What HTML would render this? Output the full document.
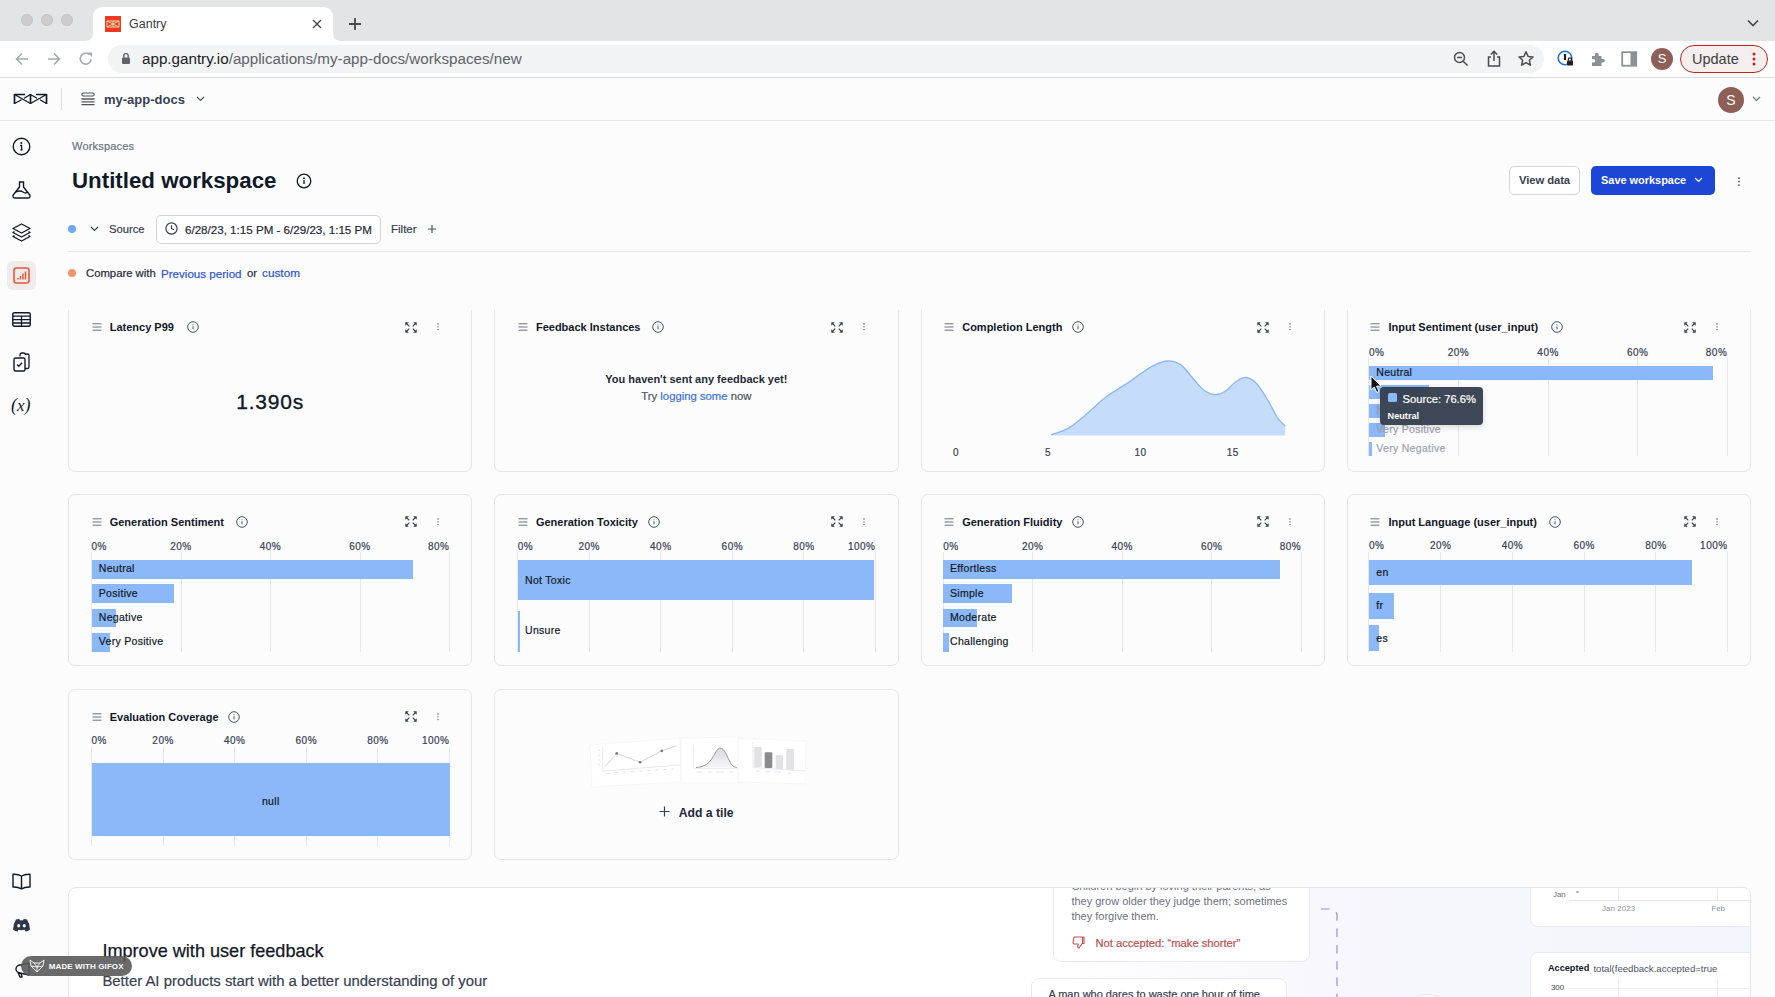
<!DOCTYPE html>
<html><head><meta charset="utf-8">
<style>
*{box-sizing:border-box;margin:0;padding:0}
html,body{width:1775px;height:997px;overflow:hidden;background:#fcfcfd;font-family:"Liberation Sans",sans-serif;color:#111827}
.a{position:absolute}
.t{position:absolute;white-space:nowrap;line-height:1}
.m{-webkit-text-stroke:0.2px currentColor}
svg{position:absolute;overflow:visible}
/* chrome */
#tabstrip{left:0;top:0;width:1775px;height:41px;background:#e3e4e8}
#toolbar{left:0;top:41px;width:1775px;height:37px;background:#fff;border-bottom:1px solid #d9dadc}
.light{width:12px;height:12px;border-radius:50%;background:#cdcdd0;border:1px solid #c2c2c5;top:14px}
#tab{left:93px;top:7px;width:240px;height:34px;background:#fff;border-radius:9px 9px 0 0}
#omni{left:108px;top:45px;width:1436px;height:28px;background:#f1f3f4;border-radius:14px}
/* app */
#apphdr{left:0;top:78px;width:1775px;height:43px;background:#fcfcfd;border-bottom:1px solid #e5e7eb}
.card{position:absolute;background:#fcfcfd;border:1.5px solid #e3e5e9;border-radius:7px;overflow:hidden}
.ctitle{position:absolute;font-size:11px;font-weight:700;color:#111827;white-space:nowrap;line-height:1}
.axis{position:absolute;font-size:10px;color:#374151;white-space:nowrap;line-height:1;letter-spacing:0.5px;-webkit-text-stroke:0.2px #374151}
.grid{position:absolute;width:1px;background:#e5e7eb}
.bar{position:absolute;background:#8ab8f8}
.blab{position:absolute;font-size:10.5px;color:#111827;white-space:nowrap;line-height:1;letter-spacing:0.3px;-webkit-text-stroke:0.2px currentColor}
</style></head><body>

<!-- ============ CHROME ============ -->
<div id="tabstrip" class="a"></div>
<div class="a light" style="left:21px"></div>
<div class="a light" style="left:41px"></div>
<div class="a light" style="left:61px"></div>
<div id="tab" class="a"></div>
<svg style="left:85px;top:33px" width="8" height="8" viewBox="0 0 8 8"><path d="M0 8 Q8 8 8 0 V8 Z" fill="#fff"/></svg>
<svg style="left:333px;top:33px" width="8" height="8" viewBox="0 0 8 8"><path d="M8 8 Q0 8 0 0 V8 Z" fill="#fff"/></svg>
<div id="toolbar" class="a"></div>
<div id="omni" class="a"></div>

<!-- favicon -->
<div class="a" style="left:105px;top:16px;width:16px;height:16px;background:#ef3a22"></div>
<svg style="left:105px;top:16px" width="16" height="16" viewBox="0 0 16 16"><path d="M2 5 L14 11 M2 11 L14 5 M2 5 V11 M14 5 V11 M8 5 V11 M2 5 H14 M2 11 H14" stroke="#f5d9a8" stroke-width="1" fill="none"/></svg>
<div class="t" style="left:129px;top:18px;font-size:12.5px;color:#3c4043">Gantry</div>
<svg style="left:312px;top:19px" width="10" height="10" viewBox="0 0 10 10"><path d="M1 1 L9 9 M9 1 L1 9" stroke="#45474a" stroke-width="1.3"/></svg>
<svg style="left:348px;top:17px" width="14" height="14" viewBox="0 0 14 14"><path d="M7 1 V13 M1 7 H13" stroke="#45474a" stroke-width="1.8"/></svg>
<svg style="left:1747px;top:18px" width="12" height="10" viewBox="0 0 12 10"><path d="M1 2.5 L6 7.5 L11 2.5" stroke="#45474a" stroke-width="1.6" fill="none"/></svg>
<!-- nav -->
<svg style="left:14px;top:51px" width="16" height="16" viewBox="0 0 16 16"><path d="M14 8 H2.5 M8 2.5 L2.5 8 L8 13.5" stroke="#a6a9ad" stroke-width="1.6" fill="none"/></svg>
<svg style="left:46px;top:51px" width="16" height="16" viewBox="0 0 16 16"><path d="M2 8 H13.5 M8 2.5 L13.5 8 L8 13.5" stroke="#a6a9ad" stroke-width="1.6" fill="none"/></svg>
<svg style="left:78px;top:51px" width="16" height="16" viewBox="0 0 16 16"><path d="M13.2 8.5 A5.5 5.5 0 1 1 11.5 3.6" stroke="#a6a9ad" stroke-width="1.6" fill="none"/><path d="M9.5 1.5 L14 1.5 L14 6 Z" fill="#a6a9ad"/></svg>
<!-- lock -->
<svg style="left:121px;top:52px" width="10" height="13" viewBox="0 0 10 13"><rect x="1" y="5.5" width="8" height="6.5" rx="1" fill="#5f6368"/><path d="M2.8 5.8 V3.8 A2.2 2.2 0 0 1 7.2 3.8 V5.8" stroke="#5f6368" stroke-width="1.4" fill="none"/></svg>
<div class="t" style="left:142px;top:51px;font-size:15.2px;color:#5f6368"><span style="color:#202124">app.gantry.io</span>/applications/my-app-docs/workspaces/new</div>
<!-- right icons -->
<svg style="left:1453px;top:51px" width="16" height="16" viewBox="0 0 16 16"><circle cx="6.5" cy="6.5" r="5" stroke="#4a4d51" stroke-width="1.5" fill="none"/><path d="M4 6.5 H9 M10.2 10.2 L14.5 14.5" stroke="#4a4d51" stroke-width="1.5"/></svg>
<svg style="left:1486px;top:50px" width="16" height="18" viewBox="0 0 16 18"><path d="M8 1.5 V11 M4.8 4.5 L8 1.3 L11.2 4.5" stroke="#4a4d51" stroke-width="1.5" fill="none"/><path d="M5 7 H2.5 V16 H13.5 V7 H11" stroke="#4a4d51" stroke-width="1.5" fill="none"/></svg>
<svg style="left:1517px;top:50px" width="18" height="18" viewBox="0 0 18 18"><path d="M9 1.8 L11.1 6.4 L16 6.9 L12.3 10.2 L13.4 15.2 L9 12.6 L4.6 15.2 L5.7 10.2 L2 6.9 L6.9 6.4 Z" stroke="#4a4d51" stroke-width="1.5" fill="none" stroke-linejoin="round"/></svg>
<svg style="left:1557px;top:50px" width="18" height="18" viewBox="0 0 18 18"><circle cx="8" cy="8" r="6.8" stroke="#1a73e8" stroke-width="1.6" fill="#fff"/><path d="M8 4 V10" stroke="#202124" stroke-width="2.2"/><rect x="10" y="10.5" width="6" height="5" rx="1" fill="#202124"/><path d="M11.3 10.8 V9.5 A1.7 1.7 0 0 1 14.7 9.5 V10.8" stroke="#202124" stroke-width="1.2" fill="none"/></svg>
<svg style="left:1589px;top:51px" width="17" height="17" viewBox="0 0 17 17"><path d="M3 5 H6 V3.5 A1.8 1.8 0 0 1 9.6 3.5 V5 H12.5 V8 H14 A1.8 1.8 0 0 1 14 11.6 H12.5 V15 H3 V11.6 H4.5 A1.8 1.8 0 0 0 4.5 8 H3 Z" fill="#8d9096"/></svg>
<svg style="left:1621px;top:51px" width="17" height="16" viewBox="0 0 17 16"><rect x="1.2" y="1.2" width="14" height="13.5" stroke="#8d9096" stroke-width="1.8" fill="none"/><rect x="9.5" y="1.2" width="5.7" height="13.5" fill="#8d9096"/></svg>
<div class="a" style="left:1651px;top:48px;width:22px;height:22px;border-radius:50%;background:#8e5f57"></div>
<div class="t" style="left:1651px;top:52px;width:22px;text-align:center;font-size:13px;color:#fff">S</div>
<div class="a" style="left:1680px;top:45px;width:88px;height:28px;border-radius:14px;border:1.5px solid #c5221f;background:#f4eeee"></div>
<div class="t" style="left:1692px;top:52px;font-size:14.5px;color:#3c4043">Update</div>
<svg style="left:1751px;top:52px" width="6" height="14" viewBox="0 0 6 14"><circle cx="3" cy="2" r="1.5" fill="#c5221f"/><circle cx="3" cy="7" r="1.5" fill="#c5221f"/><circle cx="3" cy="12" r="1.5" fill="#c5221f"/></svg>

<!-- ============ APP HEADER ============ -->
<div id="apphdr" class="a"></div>

<!-- logo -->
<svg style="left:13px;top:93px" width="36" height="12" viewBox="0 0 36 12"><path d="M1.5 1.5 H12 M23 1.5 H33.5 M1.5 1.5 L17.5 10.5 M17.5 10.5 L33.5 1.5 M1.5 10.5 L8.5 6.8 M11 5.2 L17.5 1.5 M17.5 1.5 L24 5.2 M27 6.8 L33.5 10.5" stroke="#111827" stroke-width="1.3" fill="none"/><path d="M1.5 1 V11 M17.5 1 V11 M33.5 1 V11" stroke="#111827" stroke-width="1.7"/></svg>
<div class="a" style="left:61px;top:88px;width:1px;height:22px;background:#dcdde0"></div>
<!-- stack icon -->
<svg style="left:81px;top:92px" width="14" height="14" viewBox="0 0 14 14"><rect x="0.8" y="1" width="12.4" height="3" rx="1.5" stroke="#4b5563" stroke-width="1.1" fill="none"/><path d="M0.5 7 H13.5 M0.5 9.8 H13.5 M0.5 12.6 H13.5" stroke="#4b5563" stroke-width="1.3"/></svg>
<div class="t" style="left:104px;top:92.5px;font-size:13px;font-weight:700;color:#374151">my-app-docs</div>
<svg style="left:196px;top:96px" width="9" height="6" viewBox="0 0 9 6"><path d="M1 1 L4.5 4.5 L8 1" stroke="#4b5563" stroke-width="1.2" fill="none"/></svg>
<div class="a" style="left:1718px;top:87px;width:26px;height:26px;border-radius:50%;background:#8e5f57"></div>
<div class="t" style="left:1718px;top:93px;width:26px;text-align:center;font-size:14px;color:#fff">S</div>
<svg style="left:1752px;top:96px" width="9" height="6" viewBox="0 0 9 6"><path d="M1 1 L4.5 4.5 L8 1" stroke="#6b7280" stroke-width="1.2" fill="none"/></svg>

<!-- ============ SIDEBAR ============ -->
<svg style="left:12px;top:137px" width="19" height="19" viewBox="0 0 19 19"><circle cx="9.5" cy="9.5" r="8.3" stroke="#111827" stroke-width="1.4" fill="none"/><circle cx="9.3" cy="5.9" r="1" fill="#111827"/><path d="M8.2 8.5 H9.6 V12.8 M8.4 12.8 H10.6" stroke="#111827" stroke-width="1.3" fill="none"/></svg>
<svg style="left:12px;top:181px" width="19" height="18" viewBox="0 0 19 18"><path d="M6.8 1 H12.2 M7.5 1 V6 L1.2 14 A2 2 0 0 0 3 17 H16 A2 2 0 0 0 17.8 14 L11.5 6 V1" stroke="#111827" stroke-width="1.4" fill="none" stroke-linejoin="round"/><path d="M4 11 Q8 9 11 11 T15 11" stroke="#111827" stroke-width="1.3" fill="none"/></svg>
<svg style="left:12px;top:223px" width="19" height="19" viewBox="0 0 19 19"><path d="M9.5 1 L18 5.5 L9.5 10 L1 5.5 Z" stroke="#111827" stroke-width="1.4" fill="none" stroke-linejoin="round"/><path d="M2.5 8.5 L1 9.5 L9.5 14 L18 9.5 L16.5 8.5 M2.5 12.5 L1 13.5 L9.5 18 L18 13.5 L16.5 12.5" stroke="#111827" stroke-width="1.4" fill="none" stroke-linejoin="round"/></svg>
<div class="a" style="left:7px;top:261px;width:29px;height:29px;border-radius:6px;background:#efeceb"></div>
<svg style="left:13px;top:267px" width="17" height="17" viewBox="0 0 17 17"><rect x="1" y="1" width="15" height="15" rx="2.5" stroke="#e8593a" stroke-width="1.6" fill="none"/><path d="M5 12.5 V11 M7.5 12.5 V9 M10 12.5 V6.5 M12.5 12.5 V4.5" stroke="#e8593a" stroke-width="1.5"/></svg>
<svg style="left:12px;top:312px" width="19" height="15" viewBox="0 0 19 15"><rect x="0.8" y="0.8" width="17.4" height="13.4" rx="1.5" stroke="#111827" stroke-width="1.4" fill="none"/><path d="M0.8 4.2 H18.2 M0.8 7.6 H18.2 M0.8 11 H18.2 M9.5 4.2 V14" stroke="#111827" stroke-width="1.3"/></svg>
<svg style="left:13px;top:352px" width="17" height="20" viewBox="0 0 17 20"><path d="M7 4.5 V3 A2 2 0 0 1 9 1 H10.5 A2 2 0 0 1 12.5 3 M12 2 H14.5 A1.5 1.5 0 0 1 16 3.5 V15 A1.5 1.5 0 0 1 14.5 16.5 H12" stroke="#111827" stroke-width="1.3" fill="none"/><rect x="1" y="6" width="11" height="13" rx="1.5" stroke="#111827" stroke-width="1.4" fill="none"/><path d="M4 12.5 L5.8 14.3 L9 10.8" stroke="#111827" stroke-width="1.3" fill="none"/></svg>
<div class="t" style="left:11px;top:396px;font-family:'Liberation Serif',serif;font-style:italic;font-size:18px;color:#111827">(<span style="font-size:17px">x</span>)</div>
<svg style="left:12px;top:873px" width="19" height="17" viewBox="0 0 19 17"><path d="M9.5 3 Q6 1 1 1.3 V14 Q6 13.8 9.5 15.8 Q13 13.8 18 14 V1.3 Q13 1 9.5 3 Z M9.5 3 V15.8" stroke="#111827" stroke-width="1.4" fill="none" stroke-linejoin="round"/></svg>
<svg style="left:12px;top:918px" width="19" height="14" viewBox="0 0 19 14"><path d="M4 1.5 Q7 0.5 7.8 1.5 L8.3 2.4 Q9.5 2.2 10.7 2.4 L11.2 1.5 Q12 0.5 15 1.5 Q18 6 18 11.5 Q16 13.3 13.5 13.5 L12.5 11.8 Q10 12.6 6.5 11.8 L5.5 13.5 Q3 13.3 1 11.5 Q1 6 4 1.5 Z" fill="#2d3748"/><ellipse cx="6.7" cy="7.8" rx="1.5" ry="1.7" fill="#fff"/><ellipse cx="12.3" cy="7.8" rx="1.5" ry="1.7" fill="#fff"/></svg>
<svg style="left:12px;top:962px" width="19" height="16" viewBox="0 0 19 16"><path d="M6 3.5 A4 4 0 0 0 6 10.5 L17 13 V1 Z M6 10.5 L8 15 H10 L9 11" stroke="#111827" stroke-width="1.4" fill="none" stroke-linejoin="round"/></svg>

<!-- ============ TITLE AREA ============ -->
<div class="t m" style="left:72px;top:141px;font-size:11px;color:#6b7280;letter-spacing:0.2px">Workspaces</div>
<div class="t" style="left:72px;top:170px;font-size:22.3px;font-weight:700;color:#111827">Untitled workspace</div>
<svg style="left:296px;top:173px" width="16" height="16" viewBox="0 0 16 16"><circle cx="8" cy="8" r="6.8" stroke="#111827" stroke-width="1.3" fill="none"/><circle cx="8" cy="5.2" r="0.9" fill="#111827"/><path d="M8 7.3 V11" stroke="#111827" stroke-width="1.4"/></svg>
<div class="a" style="left:1509px;top:166px;width:71px;height:29px;border:1px solid #d1d5db;border-radius:5px;background:#fff"></div>
<div class="t" style="left:1519px;top:175px;font-size:11.3px;color:#374151;font-weight:700;letter-spacing:-0.1px">View data</div>
<div class="a" style="left:1591px;top:166px;width:124px;height:29px;border-radius:5px;background:#1d45d6"></div>
<div class="t" style="left:1601px;top:175.2px;font-size:10.95px;color:#fff;font-weight:700">Save workspace</div>
<svg style="left:1694px;top:177px" width="9" height="6" viewBox="0 0 9 6"><path d="M1 1 L4.5 4.5 L8 1" stroke="#fff" stroke-width="1.2" fill="none"/></svg>
<svg style="left:1736.5px;top:175.5px" width="4" height="12" viewBox="0 0 4 12"><circle cx="2" cy="2.2" r="0.85" fill="#374151"/><circle cx="2" cy="5.6" r="0.85" fill="#374151"/><circle cx="2" cy="9" r="0.85" fill="#374151"/></svg>

<!-- filter row -->
<div class="a" style="left:68px;top:225px;width:8px;height:8px;border-radius:50%;background:#6fa8f5"></div>
<svg style="left:90px;top:226px" width="9" height="6" viewBox="0 0 9 6"><path d="M1 1 L4.5 4.5 L8 1" stroke="#374151" stroke-width="1.2" fill="none"/></svg>
<div class="t m" style="left:109px;top:224px;font-size:11.2px;color:#374151">Source</div>
<div class="a" style="left:156px;top:215px;width:225px;height:29px;border:1px solid #d1d5db;border-radius:5px;background:#fff"></div>
<svg style="left:165px;top:222px" width="13" height="13" viewBox="0 0 13 13"><circle cx="6.5" cy="6.5" r="5.6" stroke="#374151" stroke-width="1.2" fill="none"/><path d="M6.5 3.3 V6.5 L8.8 7.8" stroke="#374151" stroke-width="1.2" fill="none"/></svg>
<div class="t m" style="left:185px;top:224px;font-size:11.6px;color:#1f2937">6/28/23, 1:15 PM - 6/29/23, 1:15 PM</div>
<div class="t m" style="left:391px;top:224px;font-size:11.5px;color:#374151">Filter</div>
<svg style="left:427px;top:224px" width="10" height="10" viewBox="0 0 10 10"><path d="M5 1 V9 M1 5 H9" stroke="#4b5563" stroke-width="1.2"/></svg>
<div class="a" style="left:68px;top:251px;width:1683px;height:1px;background:#e5e7eb"></div>
<div class="a" style="left:68px;top:269px;width:8px;height:8px;border-radius:50%;background:#f2956b"></div>
<div class="t m" style="left:86px;top:268px;font-size:11.3px;color:#1f2937">Compare with</div>
<div class="t m" style="left:161px;top:267.6px;font-size:11.6px;color:#2b55d0">Previous period</div>
<div class="t m" style="left:247px;top:268px;font-size:11.3px;color:#1f2937">or</div>
<div class="t m" style="left:262px;top:267.7px;font-size:11.8px;color:#2b55d0">custom</div>

<!--CARDS-->
<div class="a" style="left:0;top:310px;width:1775px;height:180px;overflow:hidden"><div class="a" style="left:0;top:-310px;width:1775px;height:500px">
<div class="card" style="left:68px;top:299.5px;width:404.25px;height:172px"></div>
<svg style="left:91.5px;top:323.0px" width="10" height="8" viewBox="0 0 10 8"><path d="M0.5 0.8 H9.5 M0.5 4 H9.5 M0.5 7.2 H9.5" stroke="#6b7280" stroke-width="1"/></svg>
<div class="ctitle" style="left:109.7px;top:322.4px">Latency P99</div>
<svg style="left:187px;top:321.2px" width="12" height="12" viewBox="0 0 12 12"><circle cx="6" cy="6" r="5.3" stroke="#4b5563" stroke-width="1" fill="none"/><path d="M6 5.3 V8.3" stroke="#4b5563" stroke-width="1"/><circle cx="6" cy="3.7" r="0.55" fill="#4b5563"/></svg>
<svg style="left:404.85px;top:321.8px" width="12" height="11" viewBox="0 0 12 11"><path d="M0.3 0.3 H3.8 L0.3 3.8 Z M11.7 0.3 H8.2 L11.7 3.8 Z M0.3 10.7 H3.8 L0.3 7.2 Z M11.7 10.7 H8.2 L11.7 7.2 Z" fill="#374151"/><path d="M1.5 1.5 L4.3 4.3 M10.5 1.5 L7.7 4.3 M1.5 9.5 L4.3 6.7 M10.5 9.5 L7.7 6.7" stroke="#374151" stroke-width="1.1"/></svg>
<svg style="left:436.75px;top:323.0px" width="2" height="8" viewBox="0 0 2 8"><circle cx="1" cy="1" r="0.65" fill="#374151"/><circle cx="1" cy="3.8" r="0.65" fill="#374151"/><circle cx="1" cy="6.6" r="0.65" fill="#374151"/></svg>
<div class="t" style="left:68px;width:404.25px;text-align:center;top:391.0px;font-size:21px;letter-spacing:0.8px;color:#111827;-webkit-text-stroke:0.35px #111827">1.390s</div>
<div class="card" style="left:494.25px;top:299.5px;width:404.25px;height:172px"></div>
<svg style="left:517.75px;top:323.0px" width="10" height="8" viewBox="0 0 10 8"><path d="M0.5 0.8 H9.5 M0.5 4 H9.5 M0.5 7.2 H9.5" stroke="#6b7280" stroke-width="1"/></svg>
<div class="ctitle" style="left:535.95px;top:322.4px">Feedback Instances</div>
<svg style="left:652px;top:321.2px" width="12" height="12" viewBox="0 0 12 12"><circle cx="6" cy="6" r="5.3" stroke="#4b5563" stroke-width="1" fill="none"/><path d="M6 5.3 V8.3" stroke="#4b5563" stroke-width="1"/><circle cx="6" cy="3.7" r="0.55" fill="#4b5563"/></svg>
<svg style="left:831.1px;top:321.8px" width="12" height="11" viewBox="0 0 12 11"><path d="M0.3 0.3 H3.8 L0.3 3.8 Z M11.7 0.3 H8.2 L11.7 3.8 Z M0.3 10.7 H3.8 L0.3 7.2 Z M11.7 10.7 H8.2 L11.7 7.2 Z" fill="#374151"/><path d="M1.5 1.5 L4.3 4.3 M10.5 1.5 L7.7 4.3 M1.5 9.5 L4.3 6.7 M10.5 9.5 L7.7 6.7" stroke="#374151" stroke-width="1.1"/></svg>
<svg style="left:863.0px;top:323.0px" width="2" height="8" viewBox="0 0 2 8"><circle cx="1" cy="1" r="0.65" fill="#374151"/><circle cx="1" cy="3.8" r="0.65" fill="#374151"/><circle cx="1" cy="6.6" r="0.65" fill="#374151"/></svg>
<div class="t" style="left:494.25px;width:404.25px;text-align:center;top:373.7px;font-size:11px;font-weight:700;color:#1f2937">You haven't sent any feedback yet!</div>
<div class="t m" style="left:494.25px;width:404.25px;text-align:center;top:391.29999999999995px;font-size:11.3px;color:#4b5563">Try <span style="color:#3b6fd8">logging some</span> now</div>
<div class="card" style="left:920.5px;top:299.5px;width:404.25px;height:172px"></div>
<svg style="left:944.0px;top:323.0px" width="10" height="8" viewBox="0 0 10 8"><path d="M0.5 0.8 H9.5 M0.5 4 H9.5 M0.5 7.2 H9.5" stroke="#6b7280" stroke-width="1"/></svg>
<div class="ctitle" style="left:962.2px;top:322.4px">Completion Length</div>
<svg style="left:1072.4px;top:321.2px" width="12" height="12" viewBox="0 0 12 12"><circle cx="6" cy="6" r="5.3" stroke="#4b5563" stroke-width="1" fill="none"/><path d="M6 5.3 V8.3" stroke="#4b5563" stroke-width="1"/><circle cx="6" cy="3.7" r="0.55" fill="#4b5563"/></svg>
<svg style="left:1257.35px;top:321.8px" width="12" height="11" viewBox="0 0 12 11"><path d="M0.3 0.3 H3.8 L0.3 3.8 Z M11.7 0.3 H8.2 L11.7 3.8 Z M0.3 10.7 H3.8 L0.3 7.2 Z M11.7 10.7 H8.2 L11.7 7.2 Z" fill="#374151"/><path d="M1.5 1.5 L4.3 4.3 M10.5 1.5 L7.7 4.3 M1.5 9.5 L4.3 6.7 M10.5 9.5 L7.7 6.7" stroke="#374151" stroke-width="1.1"/></svg>
<svg style="left:1289.25px;top:323.0px" width="2" height="8" viewBox="0 0 2 8"><circle cx="1" cy="1" r="0.65" fill="#374151"/><circle cx="1" cy="3.8" r="0.65" fill="#374151"/><circle cx="1" cy="6.6" r="0.65" fill="#374151"/></svg>
<svg style="left:1040px;top:350px" width="260" height="90" viewBox="1040 350 260 90"><path d="M1051 434.8 C1054.0 433.6 1062.6 431.7 1069.3 427.6 C1076.0 423.5 1085.1 415.1 1091.2 410 C1097.3 404.9 1099.8 401.4 1105.9 396.9 C1112.0 392.4 1120.5 387.8 1127.8 382.9 C1135.1 378.0 1143.3 371.2 1149.8 367.6 C1156.3 364.0 1161.5 361.5 1166.6 361 C1171.7 360.5 1176.1 361.6 1180.6 364.6 C1185.1 367.7 1189.8 375.0 1193.7 379.3 C1197.6 383.6 1200.5 387.7 1204 390.3 C1207.5 392.9 1211.6 394.5 1215 394.7 C1218.4 394.9 1221.0 393.9 1224.5 391.7 C1228.0 389.5 1232.5 383.9 1236.2 381.5 C1239.9 379.1 1243.0 377.1 1246.4 377.5 C1249.8 377.9 1253.0 379.8 1256.7 383.7 C1260.4 387.6 1265.0 395.6 1268.4 401.2 C1271.8 406.8 1274.4 413.1 1277.2 417.3 C1280.0 421.5 1283.9 424.6 1285.2 426.1 L1285.2 435.6 L1051 435.6 Z" fill="#c5dcfa"/><path d="M1051 434.8 C1054.0 433.6 1062.6 431.7 1069.3 427.6 C1076.0 423.5 1085.1 415.1 1091.2 410 C1097.3 404.9 1099.8 401.4 1105.9 396.9 C1112.0 392.4 1120.5 387.8 1127.8 382.9 C1135.1 378.0 1143.3 371.2 1149.8 367.6 C1156.3 364.0 1161.5 361.5 1166.6 361 C1171.7 360.5 1176.1 361.6 1180.6 364.6 C1185.1 367.7 1189.8 375.0 1193.7 379.3 C1197.6 383.6 1200.5 387.7 1204 390.3 C1207.5 392.9 1211.6 394.5 1215 394.7 C1218.4 394.9 1221.0 393.9 1224.5 391.7 C1228.0 389.5 1232.5 383.9 1236.2 381.5 C1239.9 379.1 1243.0 377.1 1246.4 377.5 C1249.8 377.9 1253.0 379.8 1256.7 383.7 C1260.4 387.6 1265.0 395.6 1268.4 401.2 C1271.8 406.8 1274.4 413.1 1277.2 417.3 C1280.0 421.5 1283.9 424.6 1285.2 426.1" fill="none" stroke="#8ab8f8" stroke-width="1.3"/></svg>
<div class="axis" style="left:936px;width:40px;text-align:center;top:448.0px">0</div>
<div class="axis" style="left:1028px;width:40px;text-align:center;top:448.0px">5</div>
<div class="axis" style="left:1120.6px;width:40px;text-align:center;top:448.0px">10</div>
<div class="axis" style="left:1212.7px;width:40px;text-align:center;top:448.0px">15</div>
<div class="card" style="left:1346.75px;top:299.5px;width:404.25px;height:172px"></div>
<svg style="left:1370.25px;top:323.0px" width="10" height="8" viewBox="0 0 10 8"><path d="M0.5 0.8 H9.5 M0.5 4 H9.5 M0.5 7.2 H9.5" stroke="#6b7280" stroke-width="1"/></svg>
<div class="ctitle" style="left:1388.45px;top:322.4px">Input Sentiment (user_input)</div>
<svg style="left:1551.4px;top:321.2px" width="12" height="12" viewBox="0 0 12 12"><circle cx="6" cy="6" r="5.3" stroke="#4b5563" stroke-width="1" fill="none"/><path d="M6 5.3 V8.3" stroke="#4b5563" stroke-width="1"/><circle cx="6" cy="3.7" r="0.55" fill="#4b5563"/></svg>
<svg style="left:1683.6px;top:321.8px" width="12" height="11" viewBox="0 0 12 11"><path d="M0.3 0.3 H3.8 L0.3 3.8 Z M11.7 0.3 H8.2 L11.7 3.8 Z M0.3 10.7 H3.8 L0.3 7.2 Z M11.7 10.7 H8.2 L11.7 7.2 Z" fill="#374151"/><path d="M1.5 1.5 L4.3 4.3 M10.5 1.5 L7.7 4.3 M1.5 9.5 L4.3 6.7 M10.5 9.5 L7.7 6.7" stroke="#374151" stroke-width="1.1"/></svg>
<svg style="left:1715.5px;top:323.0px" width="2" height="8" viewBox="0 0 2 8"><circle cx="1" cy="1" r="0.65" fill="#374151"/><circle cx="1" cy="3.8" r="0.65" fill="#374151"/><circle cx="1" cy="6.6" r="0.65" fill="#374151"/></svg>
<div class="grid" style="left:1368.4px;top:357.4px;height:98.80000000000001px"></div>
<div class="grid" style="left:1458.0px;top:357.4px;height:98.80000000000001px"></div>
<div class="grid" style="left:1547.6000000000001px;top:357.4px;height:98.80000000000001px"></div>
<div class="grid" style="left:1637.2px;top:357.4px;height:98.80000000000001px"></div>
<div class="grid" style="left:1726.8000000000002px;top:357.4px;height:98.80000000000001px"></div>
<div class="axis" style="left:1368.9px;top:347.7px">0%</div>
<div class="axis" style="left:1418.5px;width:80px;text-align:center;top:347.7px">20%</div>
<div class="axis" style="left:1508.1000000000001px;width:80px;text-align:center;top:347.7px">40%</div>
<div class="axis" style="left:1597.7px;width:80px;text-align:center;top:347.7px">60%</div>
<div class="axis" style="left:1667.3000000000002px;width:60px;text-align:right;top:347.7px">80%</div>
<div class="bar" style="left:1368.9px;top:365.5px;width:344.0999999999999px;height:14.699999999999989px"></div>
<div class="bar" style="left:1368.9px;top:384.5px;width:60.59999999999991px;height:14.699999999999989px"></div>
<div class="bar" style="left:1368.9px;top:403.5px;width:11.099999999999909px;height:14.699999999999989px"></div>
<div class="bar" style="left:1368.9px;top:422.5px;width:16.09999999999991px;height:14.699999999999989px"></div>
<div class="bar" style="left:1368.9px;top:441.5px;width:3.099999999999909px;height:14.699999999999989px"></div>
<div class="blab" style="left:1376.3px;top:367.2px;color:#111827">Neutral</div>
<div class="blab" style="left:1376.3px;top:405.2px;color:#9ca3af">Negative</div>
<div class="blab" style="left:1376.3px;top:424.2px;color:#9ca3af">Very Positive</div>
<div class="blab" style="left:1376.3px;top:443.2px;color:#9ca3af">Very Negative</div>
</div></div>
<div class="card" style="left:68px;top:494px;width:404.25px;height:172px"></div>
<svg style="left:91.5px;top:517.5px" width="10" height="8" viewBox="0 0 10 8"><path d="M0.5 0.8 H9.5 M0.5 4 H9.5 M0.5 7.2 H9.5" stroke="#6b7280" stroke-width="1"/></svg>
<div class="ctitle" style="left:109.7px;top:516.9px">Generation Sentiment</div>
<svg style="left:236.2px;top:515.7px" width="12" height="12" viewBox="0 0 12 12"><circle cx="6" cy="6" r="5.3" stroke="#4b5563" stroke-width="1" fill="none"/><path d="M6 5.3 V8.3" stroke="#4b5563" stroke-width="1"/><circle cx="6" cy="3.7" r="0.55" fill="#4b5563"/></svg>
<svg style="left:404.85px;top:516.3px" width="12" height="11" viewBox="0 0 12 11"><path d="M0.3 0.3 H3.8 L0.3 3.8 Z M11.7 0.3 H8.2 L11.7 3.8 Z M0.3 10.7 H3.8 L0.3 7.2 Z M11.7 10.7 H8.2 L11.7 7.2 Z" fill="#374151"/><path d="M1.5 1.5 L4.3 4.3 M10.5 1.5 L7.7 4.3 M1.5 9.5 L4.3 6.7 M10.5 9.5 L7.7 6.7" stroke="#374151" stroke-width="1.1"/></svg>
<svg style="left:436.75px;top:517.5px" width="2" height="8" viewBox="0 0 2 8"><circle cx="1" cy="1" r="0.65" fill="#374151"/><circle cx="1" cy="3.8" r="0.65" fill="#374151"/><circle cx="1" cy="6.6" r="0.65" fill="#374151"/></svg>
<div class="grid" style="left:91.0px;top:552.3px;height:99.40000000000009px"></div>
<div class="grid" style="left:180.5px;top:552.3px;height:99.40000000000009px"></div>
<div class="grid" style="left:270.0px;top:552.3px;height:99.40000000000009px"></div>
<div class="grid" style="left:359.5px;top:552.3px;height:99.40000000000009px"></div>
<div class="grid" style="left:449.0px;top:552.3px;height:99.40000000000009px"></div>
<div class="axis" style="left:91.5px;top:542.0px">0%</div>
<div class="axis" style="left:141.0px;width:80px;text-align:center;top:542.0px">20%</div>
<div class="axis" style="left:230.5px;width:80px;text-align:center;top:542.0px">40%</div>
<div class="axis" style="left:320.0px;width:80px;text-align:center;top:542.0px">60%</div>
<div class="axis" style="left:389.5px;width:60px;text-align:right;top:542.0px">80%</div>
<div class="bar" style="left:91.5px;top:560.1px;width:321.0px;height:18.5px"></div>
<div class="bar" style="left:91.5px;top:584.3px;width:82.4px;height:18.700000000000045px"></div>
<div class="bar" style="left:91.5px;top:608.5px;width:24.900000000000006px;height:18.700000000000045px"></div>
<div class="bar" style="left:91.5px;top:632.8px;width:18.200000000000003px;height:18.90000000000009px"></div>
<div class="blab" style="left:98.8px;top:563.4000000000001px;color:#111827">Neutral</div>
<div class="blab" style="left:98.8px;top:587.5px;color:#111827">Positive</div>
<div class="blab" style="left:98.8px;top:612.0px;color:#111827">Negative</div>
<div class="blab" style="left:98.8px;top:636.2px;color:#111827">Very Positive</div>
<div class="card" style="left:494.25px;top:494px;width:404.25px;height:172px"></div>
<svg style="left:517.75px;top:517.5px" width="10" height="8" viewBox="0 0 10 8"><path d="M0.5 0.8 H9.5 M0.5 4 H9.5 M0.5 7.2 H9.5" stroke="#6b7280" stroke-width="1"/></svg>
<div class="ctitle" style="left:535.95px;top:516.9px">Generation Toxicity</div>
<svg style="left:648.1px;top:515.7px" width="12" height="12" viewBox="0 0 12 12"><circle cx="6" cy="6" r="5.3" stroke="#4b5563" stroke-width="1" fill="none"/><path d="M6 5.3 V8.3" stroke="#4b5563" stroke-width="1"/><circle cx="6" cy="3.7" r="0.55" fill="#4b5563"/></svg>
<svg style="left:831.1px;top:516.3px" width="12" height="11" viewBox="0 0 12 11"><path d="M0.3 0.3 H3.8 L0.3 3.8 Z M11.7 0.3 H8.2 L11.7 3.8 Z M0.3 10.7 H3.8 L0.3 7.2 Z M11.7 10.7 H8.2 L11.7 7.2 Z" fill="#374151"/><path d="M1.5 1.5 L4.3 4.3 M10.5 1.5 L7.7 4.3 M1.5 9.5 L4.3 6.7 M10.5 9.5 L7.7 6.7" stroke="#374151" stroke-width="1.1"/></svg>
<svg style="left:863.0px;top:517.5px" width="2" height="8" viewBox="0 0 2 8"><circle cx="1" cy="1" r="0.65" fill="#374151"/><circle cx="1" cy="3.8" r="0.65" fill="#374151"/><circle cx="1" cy="6.6" r="0.65" fill="#374151"/></svg>
<div class="grid" style="left:517.2px;top:552.3px;height:99.40000000000009px"></div>
<div class="grid" style="left:588.76px;top:552.3px;height:99.40000000000009px"></div>
<div class="grid" style="left:660.32px;top:552.3px;height:99.40000000000009px"></div>
<div class="grid" style="left:731.8800000000001px;top:552.3px;height:99.40000000000009px"></div>
<div class="grid" style="left:803.44px;top:552.3px;height:99.40000000000009px"></div>
<div class="grid" style="left:875.0px;top:552.3px;height:99.40000000000009px"></div>
<div class="axis" style="left:517.7px;top:542.0px">0%</div>
<div class="axis" style="left:549.26px;width:80px;text-align:center;top:542.0px">20%</div>
<div class="axis" style="left:620.82px;width:80px;text-align:center;top:542.0px">40%</div>
<div class="axis" style="left:692.3800000000001px;width:80px;text-align:center;top:542.0px">60%</div>
<div class="axis" style="left:763.94px;width:80px;text-align:center;top:542.0px">80%</div>
<div class="axis" style="left:815.5px;width:60px;text-align:right;top:542.0px">100%</div>
<div class="bar" style="left:517.7px;top:560.1px;width:356.0999999999999px;height:40.0px"></div>
<div class="bar" style="left:517.7px;top:611px;width:2.5px;height:40.700000000000045px"></div>
<div class="blab" style="left:525px;top:574.5px;color:#111827">Not Toxic</div>
<div class="blab" style="left:525px;top:625.4000000000001px;color:#111827">Unsure</div>
<div class="card" style="left:920.5px;top:494px;width:404.25px;height:172px"></div>
<svg style="left:944.0px;top:517.5px" width="10" height="8" viewBox="0 0 10 8"><path d="M0.5 0.8 H9.5 M0.5 4 H9.5 M0.5 7.2 H9.5" stroke="#6b7280" stroke-width="1"/></svg>
<div class="ctitle" style="left:962.2px;top:516.9px">Generation Fluidity</div>
<svg style="left:1072.4px;top:515.7px" width="12" height="12" viewBox="0 0 12 12"><circle cx="6" cy="6" r="5.3" stroke="#4b5563" stroke-width="1" fill="none"/><path d="M6 5.3 V8.3" stroke="#4b5563" stroke-width="1"/><circle cx="6" cy="3.7" r="0.55" fill="#4b5563"/></svg>
<svg style="left:1257.35px;top:516.3px" width="12" height="11" viewBox="0 0 12 11"><path d="M0.3 0.3 H3.8 L0.3 3.8 Z M11.7 0.3 H8.2 L11.7 3.8 Z M0.3 10.7 H3.8 L0.3 7.2 Z M11.7 10.7 H8.2 L11.7 7.2 Z" fill="#374151"/><path d="M1.5 1.5 L4.3 4.3 M10.5 1.5 L7.7 4.3 M1.5 9.5 L4.3 6.7 M10.5 9.5 L7.7 6.7" stroke="#374151" stroke-width="1.1"/></svg>
<svg style="left:1289.25px;top:517.5px" width="2" height="8" viewBox="0 0 2 8"><circle cx="1" cy="1" r="0.65" fill="#374151"/><circle cx="1" cy="3.8" r="0.65" fill="#374151"/><circle cx="1" cy="6.6" r="0.65" fill="#374151"/></svg>
<div class="grid" style="left:942.7px;top:552.3px;height:99.40000000000009px"></div>
<div class="grid" style="left:1032.2px;top:552.3px;height:99.40000000000009px"></div>
<div class="grid" style="left:1121.7px;top:552.3px;height:99.40000000000009px"></div>
<div class="grid" style="left:1211.2px;top:552.3px;height:99.40000000000009px"></div>
<div class="grid" style="left:1300.7px;top:552.3px;height:99.40000000000009px"></div>
<div class="axis" style="left:943.2px;top:542.0px">0%</div>
<div class="axis" style="left:992.7px;width:80px;text-align:center;top:542.0px">20%</div>
<div class="axis" style="left:1082.2px;width:80px;text-align:center;top:542.0px">40%</div>
<div class="axis" style="left:1171.7px;width:80px;text-align:center;top:542.0px">60%</div>
<div class="axis" style="left:1241.2px;width:60px;text-align:right;top:542.0px">80%</div>
<div class="bar" style="left:943.2px;top:560.1px;width:337.0px;height:18.5px"></div>
<div class="bar" style="left:943.2px;top:584.3px;width:69.29999999999995px;height:18.700000000000045px"></div>
<div class="bar" style="left:943.2px;top:608.5px;width:34.09999999999991px;height:18.700000000000045px"></div>
<div class="bar" style="left:943.2px;top:632.8px;width:5.599999999999909px;height:18.90000000000009px"></div>
<div class="blab" style="left:950px;top:563.4000000000001px;color:#111827">Effortless</div>
<div class="blab" style="left:950px;top:587.5px;color:#111827">Simple</div>
<div class="blab" style="left:950px;top:612.0px;color:#111827">Moderate</div>
<div class="blab" style="left:950px;top:636.2px;color:#111827">Challenging</div>
<div class="card" style="left:1346.75px;top:494px;width:404.25px;height:172px"></div>
<svg style="left:1370.25px;top:517.5px" width="10" height="8" viewBox="0 0 10 8"><path d="M0.5 0.8 H9.5 M0.5 4 H9.5 M0.5 7.2 H9.5" stroke="#6b7280" stroke-width="1"/></svg>
<div class="ctitle" style="left:1388.45px;top:516.9px">Input Language (user_input)</div>
<svg style="left:1549px;top:515.7px" width="12" height="12" viewBox="0 0 12 12"><circle cx="6" cy="6" r="5.3" stroke="#4b5563" stroke-width="1" fill="none"/><path d="M6 5.3 V8.3" stroke="#4b5563" stroke-width="1"/><circle cx="6" cy="3.7" r="0.55" fill="#4b5563"/></svg>
<svg style="left:1683.6px;top:516.3px" width="12" height="11" viewBox="0 0 12 11"><path d="M0.3 0.3 H3.8 L0.3 3.8 Z M11.7 0.3 H8.2 L11.7 3.8 Z M0.3 10.7 H3.8 L0.3 7.2 Z M11.7 10.7 H8.2 L11.7 7.2 Z" fill="#374151"/><path d="M1.5 1.5 L4.3 4.3 M10.5 1.5 L7.7 4.3 M1.5 9.5 L4.3 6.7 M10.5 9.5 L7.7 6.7" stroke="#374151" stroke-width="1.1"/></svg>
<svg style="left:1715.5px;top:517.5px" width="2" height="8" viewBox="0 0 2 8"><circle cx="1" cy="1" r="0.65" fill="#374151"/><circle cx="1" cy="3.8" r="0.65" fill="#374151"/><circle cx="1" cy="6.6" r="0.65" fill="#374151"/></svg>
<div class="grid" style="left:1368.4px;top:552.3px;height:99.40000000000009px"></div>
<div class="grid" style="left:1440.16px;top:552.3px;height:99.40000000000009px"></div>
<div class="grid" style="left:1511.92px;top:552.3px;height:99.40000000000009px"></div>
<div class="grid" style="left:1583.68px;top:552.3px;height:99.40000000000009px"></div>
<div class="grid" style="left:1655.44px;top:552.3px;height:99.40000000000009px"></div>
<div class="grid" style="left:1727.2px;top:552.3px;height:99.40000000000009px"></div>
<div class="axis" style="left:1368.9px;top:541.2px">0%</div>
<div class="axis" style="left:1400.66px;width:80px;text-align:center;top:541.2px">20%</div>
<div class="axis" style="left:1472.42px;width:80px;text-align:center;top:541.2px">40%</div>
<div class="axis" style="left:1544.18px;width:80px;text-align:center;top:541.2px">60%</div>
<div class="axis" style="left:1615.94px;width:80px;text-align:center;top:541.2px">80%</div>
<div class="axis" style="left:1667.7px;width:60px;text-align:right;top:541.2px">100%</div>
<div class="bar" style="left:1368.9px;top:559.8px;width:323.29999999999995px;height:25.700000000000045px"></div>
<div class="bar" style="left:1368.9px;top:592.8px;width:25.5px;height:25.800000000000068px"></div>
<div class="bar" style="left:1368.9px;top:625.4px;width:9.799999999999955px;height:25.800000000000068px"></div>
<div class="blab" style="left:1376.3px;top:567.2px;color:#111827">en</div>
<div class="blab" style="left:1376.3px;top:600.2px;color:#111827">fr</div>
<div class="blab" style="left:1376.3px;top:632.7px;color:#111827">es</div>
<div class="card" style="left:68px;top:689px;width:404.25px;height:171px"></div>
<svg style="left:91.5px;top:712.5px" width="10" height="8" viewBox="0 0 10 8"><path d="M0.5 0.8 H9.5 M0.5 4 H9.5 M0.5 7.2 H9.5" stroke="#6b7280" stroke-width="1"/></svg>
<div class="ctitle" style="left:109.7px;top:711.9px">Evaluation Coverage</div>
<svg style="left:228.4px;top:710.7px" width="12" height="12" viewBox="0 0 12 12"><circle cx="6" cy="6" r="5.3" stroke="#4b5563" stroke-width="1" fill="none"/><path d="M6 5.3 V8.3" stroke="#4b5563" stroke-width="1"/><circle cx="6" cy="3.7" r="0.55" fill="#4b5563"/></svg>
<svg style="left:404.85px;top:711.3px" width="12" height="11" viewBox="0 0 12 11"><path d="M0.3 0.3 H3.8 L0.3 3.8 Z M11.7 0.3 H8.2 L11.7 3.8 Z M0.3 10.7 H3.8 L0.3 7.2 Z M11.7 10.7 H8.2 L11.7 7.2 Z" fill="#374151"/><path d="M1.5 1.5 L4.3 4.3 M10.5 1.5 L7.7 4.3 M1.5 9.5 L4.3 6.7 M10.5 9.5 L7.7 6.7" stroke="#374151" stroke-width="1.1"/></svg>
<svg style="left:436.75px;top:712.5px" width="2" height="8" viewBox="0 0 2 8"><circle cx="1" cy="1" r="0.65" fill="#374151"/><circle cx="1" cy="3.8" r="0.65" fill="#374151"/><circle cx="1" cy="6.6" r="0.65" fill="#374151"/></svg>
<div class="grid" style="left:91.0px;top:746.6px;height:99.39999999999998px"></div>
<div class="grid" style="left:162.6px;top:746.6px;height:99.39999999999998px"></div>
<div class="grid" style="left:234.2px;top:746.6px;height:99.39999999999998px"></div>
<div class="grid" style="left:305.79999999999995px;top:746.6px;height:99.39999999999998px"></div>
<div class="grid" style="left:377.4px;top:746.6px;height:99.39999999999998px"></div>
<div class="grid" style="left:449.0px;top:746.6px;height:99.39999999999998px"></div>
<div class="axis" style="left:91.5px;top:735.5px">0%</div>
<div class="axis" style="left:123.1px;width:80px;text-align:center;top:735.5px">20%</div>
<div class="axis" style="left:194.7px;width:80px;text-align:center;top:735.5px">40%</div>
<div class="axis" style="left:266.29999999999995px;width:80px;text-align:center;top:735.5px">60%</div>
<div class="axis" style="left:337.9px;width:80px;text-align:center;top:735.5px">80%</div>
<div class="axis" style="left:389.5px;width:60px;text-align:right;top:735.5px">100%</div>
<div class="bar" style="left:91.5px;top:762.8px;width:358.5px;height:73.5px"></div>
<div class="blab" style="left:91.5px;width:358.5px;text-align:center;top:795.5px">null</div>
<div class="card" style="left:494.25px;top:689px;width:404.25px;height:171px"></div>
<svg style="left:585px;top:735px" width="225" height="55" viewBox="585 735 225 55">
<defs><linearGradient id="bg1" x1="0" y1="0" x2="0" y2="1"><stop offset="0" stop-color="#d9d9de"/><stop offset="1" stop-color="#f6f6f8"/></linearGradient></defs>
<path d="M590 745 L680 738 L681 782 L592 787 Z" fill="#fff" stroke="#f2f2f4" stroke-width="0.7"/>
<path d="M681 738 L740 737 L740 783 L681 783 Z" fill="#fff" stroke="#f2f2f4" stroke-width="0.7"/>
<path d="M738 738 L806 741 L805 784 L738 782 Z" fill="#fff" stroke="#f2f2f4" stroke-width="0.7"/>
<path d="M602.7 747 V771.2 L680 764.9" stroke="#e2e3e8" stroke-width="0.8" fill="none"/>
<path d="M605.3 766.1 L616.7 753.4 L640.1 762.3 L661.7 750.9 L676.3 745.8" stroke="#c8c9ce" stroke-width="0.8" fill="none"/>
<circle cx="616.7" cy="753.4" r="1.3" fill="#777"/><circle cx="640.1" cy="762.3" r="1.3" fill="#777"/><circle cx="661.7" cy="750.9" r="1.3" fill="#777"/>
<path d="M607 773.5 h3 M615 772.5 h3 M623 772 h3 M631 771.5 h3 M639 771 h3 M647 770.5 h3 M655 770 h3 M663 769.5 h3 M671 769 h3 M598 750 h2 M598 755 h2 M598 760 h2 M598 765 h2" stroke="#d5d6da" stroke-width="0.7"/>
<path d="M693.7 744.6 V768.7 H737" stroke="#e2e3e8" stroke-width="0.8" fill="none"/>
<path d="M696 767.5 C703 767 707 765 711 760 C715 754 717 748 720.5 748.2 C724 748 727 756 730 762 C732 766 735 767.5 737 767.5 Z" fill="url(#bg1)"/><path d="M696 767.5 C703 767 707 765 711 760 C715 754 717 748 720.5 748.2 C724 748 727 756 730 762 C732 766 735 767.5 737 767.5" fill="none" stroke="#8a8a90" stroke-width="0.9"/>
<path d="M697 772 h5 M708 772 h4 M716 772 h8 M730 772 h3" stroke="#d5d6da" stroke-width="0.7"/>
<path d="M753 742 V767.4 L805 771" stroke="#e2e3e8" stroke-width="0.8" fill="none"/>
<rect x="754.2" y="747.1" width="7.6" height="20" rx="1" fill="#e2e2e6"/>
<rect x="764.7" y="752.2" width="7.6" height="15.7" rx="1" fill="#8a8a8f"/>
<rect x="775.7" y="755.3" width="7.3" height="13.7" rx="1" fill="#e2e2e6"/>
<rect x="786.3" y="749" width="7.8" height="21.3" rx="1" fill="#e2e2e6"/>
<path d="M756 771 h5 M766 771.5 h4 M774 772 h7 M788 773 h3" stroke="#d5d6da" stroke-width="0.7"/>
</svg>
<svg style="left:659px;top:806px" width="11" height="11" viewBox="0 0 11 11"><path d="M5.5 0.5 V10.5 M0.5 5.5 H10.5" stroke="#374151" stroke-width="1.2"/></svg>
<div class="t" style="left:678.8px;top:806.6px;font-size:12.2px;font-weight:700;color:#1f2937">Add a tile</div>
<!--/CARDS-->

<!-- tooltip -->
<div class="a" style="left:1380.4px;top:387.3px;width:103px;height:38.2px;border-radius:4px;background:rgba(55,65,81,0.97);box-shadow:0 2px 6px rgba(0,0,0,0.15)"></div>
<div class="a" style="left:1388px;top:393.2px;width:9px;height:9px;border-radius:1.5px;background:#8ab8f8"></div>
<div class="t m" style="left:1402.5px;top:393.5px;font-size:11.2px;color:#fff">Source: 76.6%</div>
<div class="t" style="left:1387.5px;top:411.5px;font-size:9.2px;font-weight:700;color:#fff">Neutral</div>
<svg style="left:1370px;top:375px" width="12" height="19" viewBox="0 0 12 19"><path d="M1 1 V15 L4.3 12 L6.8 17.5 L9 16.5 L6.6 11.2 L11 11 Z" fill="#111" stroke="#fff" stroke-width="1"/></svg>

<!-- ============ BOTTOM CARD ============ -->
<div class="a" style="left:68.4px;top:887.4px;width:1682.4px;height:130px;border:1px solid #e3e5e9;border-radius:8px;background:#fff;overflow:hidden">
  <div class="a" style="left:1000px;top:0;width:700px;height:130px;background:linear-gradient(90deg,rgba(246,246,253,0) 0%,#f7f7fd 35%,#f4f4fc 100%)"></div>
  <div class="t" style="left:33px;top:53.7px;font-size:18.1px;color:#111827;-webkit-text-stroke:0.25px #111827">Improve with user feedback</div>
  <div class="t m" style="left:33px;top:86px;font-size:14.9px;color:#374151">Better AI products start with a better understanding of your</div>
  <!-- feedback card 1 -->
  <div class="a" style="left:984px;top:-40px;width:257px;height:113.5px;border:1px solid #e9eaef;border-radius:8px;background:#fff"></div>
  <div class="t" style="left:1002px;top:-9px;font-size:11px;color:#6b7280;line-height:14.8px">Children begin by loving their parents; as<br>they grow older they judge them; sometimes<br>they forgive them.</div>
  <svg style="left:1003px;top:48px" width="13" height="13" viewBox="0 0 13 13"><path d="M3.5 1 H9.5 A1 1 0 0 1 10.5 2 V7 L7 12 Q5.6 12 5.8 10.5 L6.3 8 H2.2 A1.2 1.2 0 0 1 1 6.8 L1.8 2 A1.2 1.2 0 0 1 3 1 Z M10.5 1 H12 V7.5 H10.5" stroke="#c0504d" stroke-width="1.1" fill="none" stroke-linejoin="round"/></svg>
  <div class="t m" style="left:1026px;top:49.5px;font-size:11.2px;color:#c0504d">Not accepted: “make shorter”</div>
  <!-- feedback card 2 -->
  <div class="a" style="left:961.5px;top:89.3px;width:256px;height:60px;border:1px solid #e9eaef;border-radius:8px;background:#fff"></div>
  <div class="t m" style="left:979px;top:101px;font-size:11px;color:#374151">A man who dares to waste one hour of time</div>
  <!-- dashed connector -->
  <svg style="left:1240px;top:10px" width="40" height="130" viewBox="0 0 40 130"><path d="M12 11 H21 Q27 11 28 17 V130" stroke="#8b8ff0" stroke-width="1.2" fill="none" stroke-dasharray="8.5 7.8"/></svg>
  <!-- chart card 1 -->
  <div class="a" style="left:1461px;top:-60px;width:260px;height:98.5px;border:1px solid #e9eaef;border-radius:8px;background:#fff"></div>
  <div class="a" style="left:1499.5px;top:11.7px;width:200px;height:1px;background:#e5e7eb"></div>
  <div class="a" style="left:1548.5px;top:-5px;width:1px;height:17px;background:#eceef1"></div>
  <div class="a" style="left:1647.5px;top:-5px;width:1px;height:17px;background:#eceef1"></div>
  <div class="t" style="left:1483.5px;top:2.5px;font-size:8px;color:#6b7280">Jan</div>
  <div class="a" style="left:1507px;top:2.5px;width:2.5px;height:2.5px;border-radius:50%;background:#8ab8f8"></div>
  <div class="t" style="left:1532.5px;top:17px;font-size:7.9px;color:#8b919c;letter-spacing:0.1px">Jan 2023</div>
  <div class="t" style="left:1642px;top:17px;font-size:7.9px;color:#8b919c">Feb</div>
  <!-- chart card 2 -->
  <div class="a" style="left:1461px;top:63.7px;width:260px;height:80px;border:1px solid #e9eaef;border-radius:8px;background:#fff"></div>
  <div class="t" style="left:1478.5px;top:76px;font-size:9.2px;font-weight:700;color:#111827">Accepted</div>
  <div class="t" style="left:1524px;top:76px;font-size:9.6px;color:#4b5563">total(feedback.accepted=true</div>
  <div class="t" style="left:1481.5px;top:96px;font-size:8px;color:#374151">300</div>
  <div class="a" style="left:1499.5px;top:99.2px;width:200px;height:1px;background:#eceef1"></div>
  <div class="a" style="left:1548.5px;top:92px;width:1px;height:30px;background:#eceef1"></div>
  <div class="a" style="left:1647.5px;top:92px;width:1px;height:30px;background:#eceef1"></div>
  <div class="a" style="left:1329px;top:105.3px;width:59px;height:59px;border:1px solid #e5e7eb;border-radius:50%;background:#fff"></div>
</div>

<!-- gifox badge -->
<div class="a" style="left:20.6px;top:956.2px;width:111.3px;height:20.3px;border-radius:10.2px;background:rgba(90,90,90,0.9)"></div>
<svg style="left:29px;top:959px" width="16" height="14" viewBox="0 0 16 14"><path d="M1 1 L5 4 H11 L15 1 L14 7 L8 13 L2 7 Z M5 4 L8 8 L11 4 M2 7 L8 8 L14 7 M8 8 V13" stroke="#fff" stroke-width="0.9" fill="none" stroke-linejoin="round"/></svg>
<div class="t" style="left:48.8px;top:962.5px;font-size:8px;font-weight:700;color:#fff;letter-spacing:0.1px">MADE WITH GIFOX</div>
</body></html>
